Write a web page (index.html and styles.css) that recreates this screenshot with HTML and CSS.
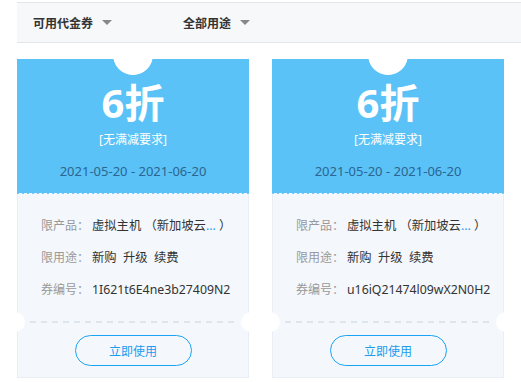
FILE: index.html
```html
<!DOCTYPE html>
<html lang="zh-CN">
<head>
<meta charset="utf-8">
<title>代金券</title>
<link rel="stylesheet" href="styles.css">
</head>
<body>
<div class="filter-bar">
  <div class="filter">可用代金券<span class="caret"></span></div>
  <div class="filter">全部用途<span class="caret"></span></div>
</div>
<div class="coupons">
  <div class="coupon">
    <div class="coupon-top">
      <div class="discount">6折</div>
      <div class="cond">[无满减要求]</div>
      <div class="date">2021-05-20 - 2021-06-20</div>
    </div>
    <div class="coupon-body">
      <div class="rows">
        <div class="row"><span class="label">限产品：</span><span class="value">虚拟主机 （新加坡云<span class="more">...</span> ）</span></div>
        <div class="row"><span class="label">限用途：</span><span class="value">新购&nbsp;&nbsp;升级&nbsp;&nbsp;续费</span></div>
        <div class="row"><span class="label">券编号：</span><span class="value">1I621t6E4ne3b27409N2</span></div>
      </div>
      <div class="divider"></div>
      <button class="use-btn">立即使用</button>
    </div>
  </div>
  <div class="coupon">
    <div class="coupon-top">
      <div class="discount">6折</div>
      <div class="cond">[无满减要求]</div>
      <div class="date">2021-05-20 - 2021-06-20</div>
    </div>
    <div class="coupon-body">
      <div class="rows">
        <div class="row"><span class="label">限产品：</span><span class="value">虚拟主机 （新加坡云<span class="more">...</span> ）</span></div>
        <div class="row"><span class="label">限用途：</span><span class="value">新购&nbsp;&nbsp;升级&nbsp;&nbsp;续费</span></div>
        <div class="row"><span class="label">券编号：</span><span class="value">u16iQ21474l09wX2N0H2</span></div>
      </div>
      <div class="divider"></div>
      <button class="use-btn">立即使用</button>
    </div>
  </div>
</div>
</body>
</html>
```
FILE: styles.css
```css
html, body {
  margin: 0;
  padding: 0;
  background: #fff;
}
body {
  padding: 2px 0 0 17px;
  font-family: "Noto Sans", "Noto Sans CJK SC", sans-serif;
  font-size: 12px;
  color: #333;
  overflow: hidden;
}
.filter-bar {
  display: flex;
  align-items: center;
  height: 39px;
  background: #f7f8fa;
  border-top: 1px solid #e4e5e7;
  border-bottom: 1px solid #e4e5e7;
  padding-left: 16px;
}
.filter {
  display: flex;
  align-items: center;
  font-weight: bold;
  font-size: 12px;
  color: #333;
  width: 150px;
}
.caret {
  display: inline-block;
  margin-left: 9px;
  width: 0;
  height: 0;
  border-left: 5px solid transparent;
  border-right: 5px solid transparent;
  border-top: 5px solid #888;
}
.coupons {
  display: flex;
  gap: 23px;
  margin-top: 16px;
}
.coupon {
  width: 232px;
  display: flex;
  flex-direction: column;
}
.coupon-top {
  position: relative;
  height: 136px;
  box-sizing: border-box;
  background: radial-gradient(circle at 50% -4px, #fff 19.5px, #5ac2f7 20.3px);
  color: #fff;
  text-align: center;
  padding-top: 23px;
}
.coupon-top::after {
  content: "";
  position: absolute;
  left: 0;
  right: 0;
  bottom: 0;
  height: 3px;
  background: radial-gradient(circle at 2.5px 3.5px, #f4f7fb 2.4px, transparent 2.9px) 1px 0 / 5px 3px repeat-x;
}
.discount {
  font-size: 40px;
  font-weight: bold;
  line-height: 42px;
}
.cond {
  margin-top: 8px;
  font-size: 12px;
  line-height: 16px;
}
.date {
  margin-top: 14px;
  font-size: 13px;
  line-height: 18px;
  color: #2b6590;
}
.coupon-body {
  position: relative;
  height: 183px;
  box-sizing: border-box;
  background: #f4f7fb;
  border: 1px solid #e9eef4;
  border-top: none;
  display: flex;
  flex-direction: column;
  align-items: center;
}
.coupon-body::before,
.coupon-body::after {
  content: "";
  position: absolute;
  top: 117px;
  width: 20px;
  height: 20px;
  border-radius: 50%;
  background: #fff;
}
.coupon-body::before { left: -13px; }
.coupon-body::after { right: -13px; }
.rows {
  align-self: stretch;
  padding: 21px 0 0 23px;
  display: flex;
  flex-direction: column;
  gap: 12px;
}
.row {
  display: flex;
  line-height: 20px;
  white-space: nowrap;
}
.label {
  width: 51px;
  color: #999;
}
.value {
  color: #333;
  font-size: 12.3px;
}
.more {
  color: #1a9cf0;
}
.divider {
  align-self: stretch;
  margin: 21px 13px 0 12px;
  height: 2px;
  background: linear-gradient(to right, #dfe5ec 6px, transparent 6px) 0 0 / 11px 2px repeat-x;
}
.use-btn {
  margin-top: 12px;
  width: 117px;
  height: 31px;
  border: 1px solid #1aa5f2;
  border-radius: 16px;
  background: transparent;
  color: #1a9cf0;
  font-family: "Noto Sans", "Noto Sans CJK SC", sans-serif;
  font-size: 12px;
  padding: 0;
}
```
